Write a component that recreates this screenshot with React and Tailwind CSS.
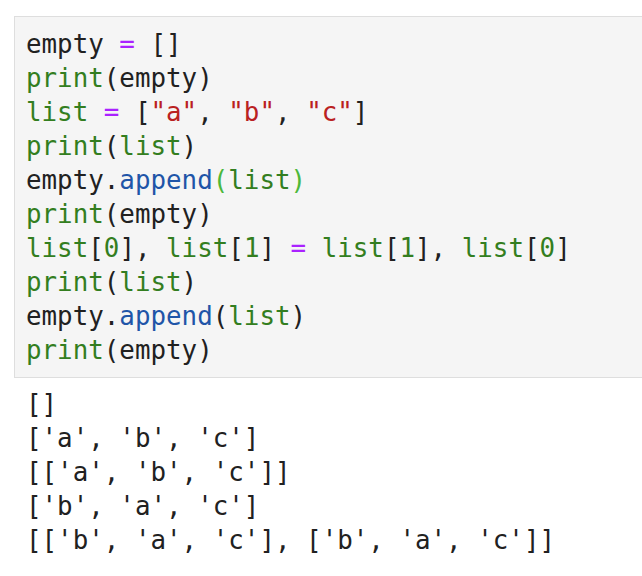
import React from 'react';

const G = ({ children }) => <span className="text-[#337e20]">{children}</span>;
const P = ({ children }) => <span className="text-[#aa22ff]">{children}</span>;
const R = ({ children }) => <span className="text-[#ba2121]">{children}</span>;
const B = ({ children }) => <span className="text-[#1f55a8]">{children}</span>;
const M = ({ children }) => <span className="text-[#4cb83a]">{children}</span>;

const App = () => {
  const output = [
    '[]',
    "['a', 'b', 'c']",
    "[['a', 'b', 'c']]",
    "['b', 'a', 'c']",
    "[['b', 'a', 'c'], ['b', 'a', 'c']]",
  ];

  return (
    <div className="w-[642px] h-[576px] overflow-hidden bg-white font-['DejaVu_Sans_Mono',monospace] text-[25.85px] leading-[34px] text-[#212121]">
      <div className="ml-[14px] mt-[16px] w-[700px] border border-[#dedede] bg-[#f5f5f5] pl-[11px] pt-[10px] pb-[10px] whitespace-pre">
        <div>empty <P>=</P> []</div>
        <div><G>print</G>(empty)</div>
        <div><G>list</G> <P>=</P> [<R>"a"</R>, <R>"b"</R>, <R>"c"</R>]</div>
        <div><G>print</G>(<G>list</G>)</div>
        <div>empty.<B>append</B><M>(</M><G>list</G><M>)</M></div>
        <div><G>print</G>(empty)</div>
        <div><G>list</G>[<G>0</G>], <G>list</G>[<G>1</G>] <P>=</P> <G>list</G>[<G>1</G>], <G>list</G>[<G>0</G>]</div>
        <div><G>print</G>(<G>list</G>)</div>
        <div>empty.<B>append</B>(<G>list</G>)</div>
        <div><G>print</G>(empty)</div>
      </div>
      <div className="ml-[26px] mt-[9px] whitespace-pre">
        {output.map((line, i) => (
          <div key={i}>{line}</div>
        ))}
      </div>
    </div>
  );
};

export default App;
